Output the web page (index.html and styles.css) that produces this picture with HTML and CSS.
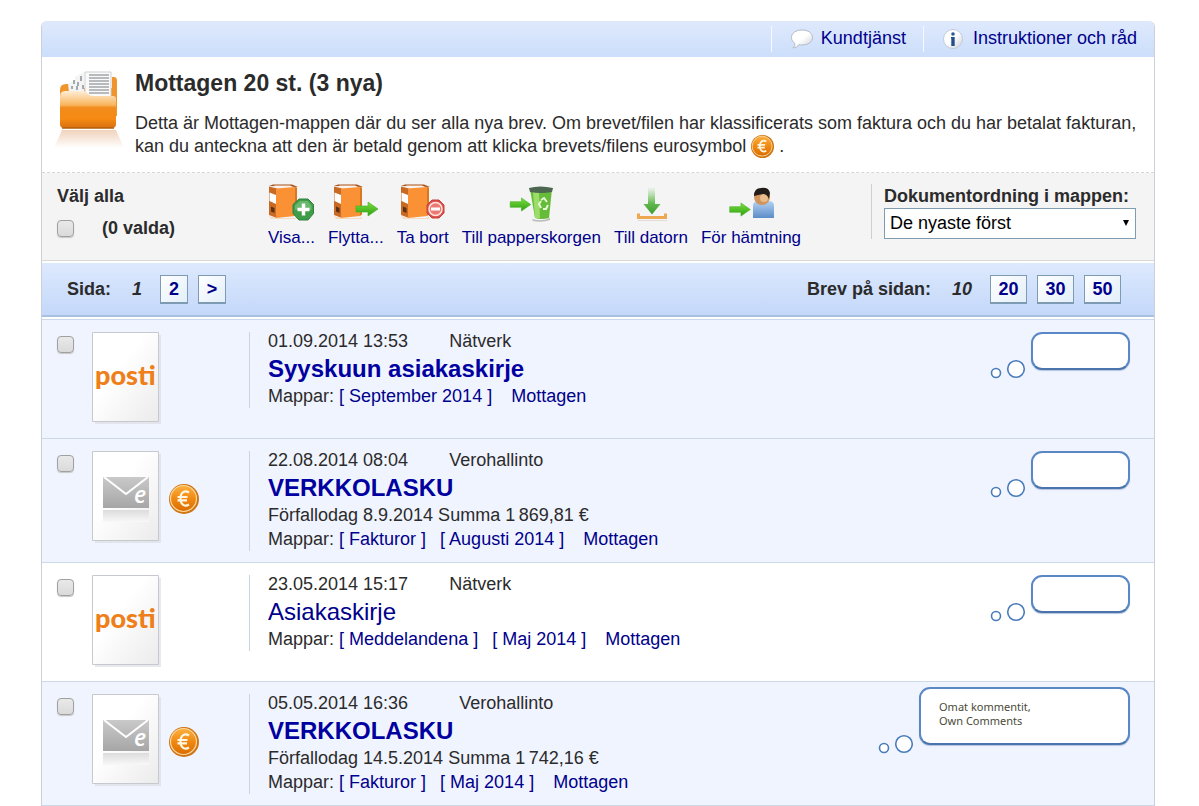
FILE: index.html
```html
<!DOCTYPE html>
<html lang="sv">
<head>
    <meta charset="UTF-8">
    <meta name="viewport" content="width=device-width, initial-scale=1.0">
    <title>Mottagen</title>
    <link rel="stylesheet" href="styles.css">
</head>
<body>

    <!-- Shared icons -->
    <svg class="sprite" aria-hidden="true">
        <defs>
            <linearGradient id="orange" x1="0" y1="0" x2="0" y2="1">
                <stop offset="0" stop-color="#fbb040"/>
                <stop offset="0.5" stop-color="#f08a12"/>
                <stop offset="1" stop-color="#d96c00"/>
            </linearGradient>
            <linearGradient id="folderFront" x1="0" y1="0" x2="0" y2="1">
                <stop offset="0" stop-color="#fdeed8"/>
                <stop offset="0.38" stop-color="#f9b45c"/>
                <stop offset="0.45" stop-color="#f28c1c"/>
                <stop offset="0.75" stop-color="#f68a12"/>
                <stop offset="1" stop-color="#d87010"/>
            </linearGradient>
            <linearGradient id="folderFade" x1="0" y1="0" x2="0" y2="1">
                <stop offset="0" stop-color="#f0d2bc"/>
                <stop offset="1" stop-color="#ffffff"/>
            </linearGradient>
            <linearGradient id="green" x1="0" y1="0" x2="0" y2="1">
                <stop offset="0" stop-color="#7be03c"/>
                <stop offset="1" stop-color="#2e9e14"/>
            </linearGradient>
            <linearGradient id="greenFade" x1="0" y1="0" x2="0" y2="1">
                <stop offset="0" stop-color="#7cc96a" stop-opacity="0"/>
                <stop offset="0.6" stop-color="#62b84e"/>
                <stop offset="1" stop-color="#3f9c30"/>
            </linearGradient>
            <linearGradient id="shirt" x1="0" y1="0" x2="0" y2="1">
                <stop offset="0" stop-color="#b4d2f2"/>
                <stop offset="1" stop-color="#5c8cc8"/>
            </linearGradient>
            <linearGradient id="page" x1="0" y1="0" x2="1" y2="1">
                <stop offset="0.4" stop-color="#ffffff"/>
                <stop offset="1" stop-color="#ebebeb"/>
            </linearGradient>
            <linearGradient id="mail" x1="0" y1="0" x2="0" y2="1">
                <stop offset="0" stop-color="#c9c9c9"/>
                <stop offset="1" stop-color="#a6a6a6"/>
            </linearGradient>
            <linearGradient id="mailFade" x1="0" y1="0" x2="0" y2="1">
                <stop offset="0" stop-color="#dcdcdc"/>
                <stop offset="1" stop-color="#f8f8f8"/>
            </linearGradient>
            <linearGradient id="bubble" x1="0" y1="0" x2="1" y2="1">
                <stop offset="0.5" stop-color="#ffffff"/>
                <stop offset="1" stop-color="#c9ced6"/>
            </linearGradient>
        </defs>

        <symbol id="euro" viewBox="0 0 30 30">
            <circle cx="15" cy="15" r="15" fill="#cf7413"/>
            <circle cx="14.500" cy="14.500" r="13" fill="url(#orange)" stroke="#fbd9a2" stroke-width="1.200"/>
            <path d="M20 8.500c-4-2.500-8.500-.5-8.500 6s4.500 8.500 8.500 6M8.500 13h10M8.500 16.400h9.500" fill="none" stroke="#fff6e4" stroke-width="2.200"/>
        </symbol>

        <symbol id="binder" viewBox="0 0 30 36">
            <path d="M1 32l7 2h18l3-1v2H3z" fill="#f7dcc2"/>
            <path d="M1 2l4-1.500h19L30 3z" fill="#a8501a"/>
            <path d="M4 2.500l3-1h15l3 1.500H8z" fill="#fff2e4"/>
            <path d="M1 2.500l8 2V34l-8-3z" fill="#c86a24"/>
            <path d="M1.500 8.500l6.500 2.500v9L1.500 17z" fill="#fff"/>
            <path d="M3 22.500l3.500 1.500v5L3 27.500z" fill="#5c3014"/>
            <path d="M8 4.500L27 3v29L8 34z" fill="#fb9135"/>
            <path d="M27 3l2 .5v27l-2 1.500z" fill="#d97822"/>
        </symbol>

        <symbol id="arrow" viewBox="0 0 24 16">
            <path d="M1 5h12V1l10 7-10 7v-4H1z" fill="url(#green)" stroke="#3fae20" stroke-width="0.600"/>
        </symbol>

        <symbol id="letter" viewBox="0 0 70 93">
            <path d="M3 3h66v89H3z" fill="#d9dbe0" opacity="0.600"/>
            <path d="M0.500 0.500h66v89H0.500z" fill="url(#page)" stroke="#c6c9ce"/>
        </symbol>

        <symbol id="envelope" viewBox="0 0 48 46">
            <path d="M1 1h46v31H1z" fill="url(#mail)"/>
            <path d="M2 1l22 17L46 1" fill="none" stroke="#fff" stroke-width="2"/>
            <path d="M1 34h46v12H1z" fill="url(#mailFade)"/>
        </symbol>

        <symbol id="thought" viewBox="0 0 36 20">
            <circle cx="6" cy="14" r="4.500" fill="#fff" stroke="#4a7cbc" stroke-width="1.600"/>
            <circle cx="26" cy="10" r="8.300" fill="#fff" stroke="#4a7cbc" stroke-width="1.600"/>
        </symbol>
    </svg>

    <div class="mailbox">

        <div class="topbar">
            <a class="topbar-link" href="#">
                <svg class="icon-bubble" viewBox="0 0 22 20"><path d="M11 1c6 0 10.500 3 10.500 7.500S17 16 11 16c-1 0-2-.1-3-.4C6.500 18 4.500 18.800 2 18.800c1.500-1.300 2-2.500 2-4.300C1.800 13 .5 11 .5 8.500.5 4 5 1 11 1z" fill="url(#bubble)" stroke="#b4bac6"/></svg>
                Kundtjänst
            </a>
            <a class="topbar-link" href="#">
                <svg class="icon-info" viewBox="0 0 20 20"><circle cx="10" cy="10" r="9.500" fill="url(#bubble)" stroke="#c4cad8"/><circle cx="10" cy="5" r="1.800" fill="#2a5a9c"/><path d="M8 8h3.700v9H8.300V9.500H8z" fill="#244f8c"/></svg>
                Instruktioner och råd
            </a>
        </div>

        <div class="intro">
            <svg class="icon-folder" viewBox="0 0 72 84">
                <path d="M10 60h54l8 18H2z" fill="url(#folderFade)"/>
                <path d="M8 20q0-6 6-6h3q2 0 3 4h40V7h2q3 0 3 4v35H8z" fill="#f0952c"/>
                <path d="M16 14l7-4v-3l9-5v28H18z" fill="#f4f4f4"/>
                <path d="M22 10v4m-2 2v3m6-7v4m3-10v5m-4 5v4m6-5v4" stroke="#8a9098" stroke-width="1.500"/>
                <path d="M33 2h26v28H33z" fill="#fafafa" stroke="#d0d0d0"/>
                <path d="M37 5h20M37 8h20M37 11h20M37 14h20M37 17h20M37 20h20M37 23h20" stroke="#a2a6aa" stroke-width="1.500"/>
                <path d="M8 27q0-6 5-6h18q3 0 5 3 2 2 5 2h20q3 0 3 3v25q0 4-4 4H12q-4 0-4-4z" fill="url(#folderFront)"/>
                <path d="M10 58h52" stroke="#b45c08" stroke-width="1.500"/>
            </svg>
            <div class="intro-text">
                <h1>Mottagen 20 st. (3 nya)</h1>
                <p>Detta är Mottagen-mappen där du ser alla nya brev. Om brevet/filen har klassificerats som faktura och du har betalat fakturan, kan du anteckna att den är betald genom att klicka brevets/filens eurosymbol <svg class="icon-euro-small"><use href="#euro"/></svg> .</p>
            </div>
        </div>

        <div class="toolbar">
            <div class="select-all">
                <label for="all">Välj alla</label>
                <div class="selected"><input type="checkbox" id="all"> <span>(0 valda)</span></div>
            </div>

            <div class="tools">
                <a href="#">
                    <svg class="tool-icon" viewBox="0 0 46 38">
                        <use href="#binder" width="30" height="36"/>
                        <path d="M31 15h9l5.500 5.500v9L40 36h-9l-6-6.500v-9z" fill="#3f9c48" stroke="#2f8040"/>
                        <path d="M32 17h7.500l4 4.500V26H27v-4.500z" fill="#7cc47e" opacity="0.700"/>
                        <path d="M35.500 19.500v12M29.500 25.500h12" stroke="#fff" stroke-width="3.500"/>
                    </svg>
                    Visa...
                </a>
                <a href="#">
                    <svg class="tool-icon" viewBox="0 0 46 38"><use href="#binder" width="30" height="36"/><use href="#arrow" x="22" y="17" width="24" height="16"/></svg>
                    Flytta...
                </a>
                <a href="#">
                    <svg class="tool-icon" viewBox="0 0 46 38">
                        <use href="#binder" width="30" height="36"/>
                        <path d="M32 16h7l5 5v8l-5 5h-7l-5-5v-8z" fill="#dc4f48" stroke="#c8403c"/>
                        <circle cx="35.500" cy="25" r="6.500" fill="#ec7a72" stroke="#ffe4e0" stroke-width="1.500"/>
                        <path d="M31 25h9" stroke="#fff" stroke-width="3"/>
                    </svg>
                    Ta bort
                </a>
                <a href="#">
                    <svg class="tool-icon" viewBox="0 0 46 38">
                        <path d="M24 35q10 3 18-1v2q-8 3-17 1z" fill="#b8bcb4"/>
                        <path d="M22 5h22l-3 29q-7 2-14 0z" fill="#66bb38"/>
                        <path d="M25 8h6l1 26h-5z" fill="#9ade68"/>
                        <path d="M21 4q11-3 24 0l-1 4q-11 2-22 0z" fill="#4c6650"/>
                        <path d="M33 16l3-2 3 4M40 21l-2 4h-3M33 24l-2-4 2-3" fill="none" stroke="#e4f8d8" stroke-width="2"/>
                        <use href="#arrow" x="1" y="13" width="23" height="15"/>
                    </svg>
                    Till papperskorgen
                </a>
                <a href="#">
                    <svg class="tool-icon" viewBox="0 0 46 38">
                        <path d="M20 3h7v17h5.500L24 30.500 15.500 20H20z" fill="url(#greenFade)"/>
                        <path d="M10.500 29.500v4h27v-4" fill="none" stroke="#eda851" stroke-width="3"/>
                        <path d="M10 36.500h29" stroke="#e0dcd6"/>
                    </svg>
                    Till datorn
                </a>
                <a href="#">
                    <svg class="tool-icon" viewBox="0 0 46 38">
                        <path d="M25 34V22q0-5 5-5h11q5 0 5 5v12z" fill="url(#shirt)"/>
                        <circle cx="34" cy="13" r="8" fill="#d0945c"/>
                        <circle cx="36" cy="14" r="4" fill="#e8bc8c"/>
                        <path d="M26 12q0-8 7-8 8-1 9 5l-1 6q-2-5-6-5-5 1-9 2z" fill="#241c18"/>
                        <use href="#arrow" x="0" y="18" width="24" height="15"/>
                    </svg>
                    För hämtning
                </a>
            </div>

            <div class="sorting">
                <label for="order">Dokumentordning i mappen:</label>
                <div class="select-box">
                    <select id="order">
                        <option>De nyaste först</option>
                        <option>De äldsta först</option>
                    </select>
                    <svg class="select-arrow" viewBox="0 0 6 6"><path d="M0 0h6L3 6z"/></svg>
                </div>
            </div>
        </div>

        <div class="pager">
            <div class="pager-group">
                <span class="pager-label">Sida:</span>
                <em>1</em>
                <a href="#">2</a>
                <a href="#">&gt;</a>
            </div>
            <div class="pager-group">
                <span class="pager-label">Brev på sidan:</span>
                <em>10</em>
                <a class="wide" href="#">20</a>
                <a class="wide" href="#">30</a>
                <a class="wide" href="#">50</a>
            </div>
        </div>

        <div class="letters">
            <div class="letter unread">
                <input type="checkbox" aria-label="Syyskuun asiakaskirje">
                <div class="thumb"><svg><use href="#letter"/></svg><span class="posti">posti</span></div>
                <div class="paid"></div>
                <div class="info">
                    <div class="meta">01.09.2014 13:53<span class="sender">Nätverk</span></div>
                    <h2><a href="#">Syyskuun asiakaskirje</a></h2>
                    <div class="line">Mappar: <a class="folder" href="#">[ September 2014 ]</a> <a class="inbox" href="#">Mottagen</a></div>
                </div>
                <div class="comment"><svg><use href="#thought"/></svg><div class="bubble"></div></div>
            </div>

            <div class="letter unread">
                <input type="checkbox" aria-label="Verkkolasku 22.08.2014">
                <div class="thumb"><svg><use href="#letter"/></svg><svg class="envelope"><use href="#envelope"/></svg><span class="e">e</span></div>
                <div class="paid"><svg class="icon-euro"><use href="#euro"/></svg></div>
                <div class="info">
                    <div class="meta">22.08.2014 08:04<span class="sender">Verohallinto</span></div>
                    <h2><a href="#">VERKKOLASKU</a></h2>
                    <div class="line">Förfallodag 8.9.2014 Summa 1&#8201;869,81 €</div>
                    <div class="line">Mappar: <a class="folder" href="#">[ Fakturor ]</a> <a class="folder" href="#">[ Augusti 2014 ]</a> <a class="inbox" href="#">Mottagen</a></div>
                </div>
                <div class="comment"><svg><use href="#thought"/></svg><div class="bubble"></div></div>
            </div>

            <div class="letter read">
                <input type="checkbox" aria-label="Asiakaskirje">
                <div class="thumb"><svg><use href="#letter"/></svg><span class="posti">posti</span></div>
                <div class="paid"></div>
                <div class="info">
                    <div class="meta">23.05.2014 15:17<span class="sender">Nätverk</span></div>
                    <h2><a href="#">Asiakaskirje</a></h2>
                    <div class="line">Mappar: <a class="folder" href="#">[ Meddelandena ]</a> <a class="folder" href="#">[ Maj 2014 ]</a> <a class="inbox" href="#">Mottagen</a></div>
                </div>
                <div class="comment"><svg><use href="#thought"/></svg><div class="bubble"></div></div>
            </div>

            <div class="letter unread">
                <input type="checkbox" aria-label="Verkkolasku 05.05.2014">
                <div class="thumb"><svg><use href="#letter"/></svg><svg class="envelope"><use href="#envelope"/></svg><span class="e">e</span></div>
                <div class="paid"><svg class="icon-euro"><use href="#euro"/></svg></div>
                <div class="info">
                    <div class="meta">05.05.2014 16:36&nbsp;&nbsp;<span class="sender">Verohallinto</span></div>
                    <h2><a href="#">VERKKOLASKU</a></h2>
                    <div class="line">Förfallodag 14.5.2014 Summa 1&#8201;742,16 €</div>
                    <div class="line">Mappar: <a class="folder" href="#">[ Fakturor ]</a> <a class="folder" href="#">[ Maj 2014 ]</a> <a class="inbox" href="#">Mottagen</a></div>
                </div>
                <div class="comment written"><svg><use href="#thought"/></svg><div class="bubble">Omat kommentit,<br>Own Comments</div></div>
            </div>
        </div>
    </div>

</body>
</html>
```
FILE: styles.css
```css
* {
    box-sizing: border-box;
}

body {
    margin: 21px 44px 0 41px;
    font-family: "Liberation Sans", Arial, sans-serif;
    font-size: 18px;
    color: #2b2b2b;
    background-color: #fff;
}

a {
    color: #00008b;
    text-decoration: none;
}

svg {
    display: block;
    flex: none;
}

.sprite {
    position: absolute;
    width: 0;
    height: 0;
}

.mailbox {
    border: 1px solid #ccd0d8;
    border-top: 0;
    border-radius: 6px 6px 0 0;
    overflow: hidden;
}

/* Top bar */
.topbar {
    display: flex;
    justify-content: flex-end;
    padding: 5px 0;
    background: linear-gradient(#dfe9fc, #cbdefb);
}

.topbar-link {
    display: flex;
    align-items: center;
    gap: 8px;
    height: 26px;
    padding: 0 17px 2px 19px;
    border-left: 1px solid #f6f9ff;
}

.icon-bubble {
    width: 22px;
    height: 20px;
    margin-top: 2px;
}

.icon-info {
    width: 20px;
    height: 20px;
    margin: 2px 2px 0 0;
}

/* Folder heading */
.intro {
    display: flex;
    gap: 11px;
    padding: 13px 10px 14px;
    border-bottom: 1px dashed #d6d6d6;
}

.icon-folder {
    width: 72px;
    height: 84px;
}

h1 {
    margin: 0 0 16px;
    font-size: 23px;
    line-height: 26px;
}

.intro p {
    margin: 0;
    line-height: 23px;
}

.icon-euro-small {
    display: inline-block;
    width: 23px;
    height: 23px;
    vertical-align: top;
}

/* Toolbar */
.toolbar {
    display: flex;
    padding: 11px 18px 12px 15px;
    background-color: #f4f4f4;
    border-bottom: 1px solid #d8d8d8;
}

.select-all,
.sorting {
    font-weight: bold;
    line-height: 24px;
}

.select-all {
    width: 211px;
}

.selected {
    display: flex;
    align-items: center;
    gap: 28px;
    margin-top: 8px;
}

input[type="checkbox"] {
    appearance: none;
    flex: none;
    width: 17px;
    height: 17px;
    margin: 0;
    border: 1px solid #a0a0a0;
    border-radius: 4px;
    background: linear-gradient(#e9e9e9, #dadada);
    box-shadow: 0 1px 1px #c8c8c8;
}

input[type="checkbox"]:checked {
    background: #6d8fc7;
}

.tools {
    display: flex;
    flex: 1;
    gap: 13px;
}

.tools a {
    display: flex;
    flex-direction: column;
    align-items: center;
    gap: 6px;
    font-size: 17px;
    line-height: 20px;
    white-space: nowrap;
}

.tool-icon {
    width: 46px;
    height: 38px;
}

.sorting {
    padding-left: 12px;
    border-left: 1px solid #cfcfcf;
    height: 55px;
}

.sorting label {
    display: block;
}

.select-box {
    position: relative;
    width: 252px;
}

.select-box select {
    appearance: none;
    display: block;
    width: 100%;
    height: 31px;
    padding: 0 20px 2px 5px;
    border: 1px solid #7f9db0;
    border-radius: 0;
    background-color: #fff;
    font-family: inherit;
    font-size: 18px;
    color: #000;
}

.select-arrow {
    position: absolute;
    top: 12px;
    right: 7px;
    width: 6px;
    height: 6px;
}

/* Paging */
.pager {
    display: flex;
    justify-content: space-between;
    margin: 2px 0;
    padding: 12px 33px 11px 25px;
    background: linear-gradient(#dde9fd, #c4d8fa);
    border-bottom: 2px solid #a9bfe3;
    font-weight: bold;
}

.pager-group {
    display: flex;
    align-items: center;
    gap: 10px;
}

.pager-label {
    margin-right: 11px;
}

.pager em {
    margin-right: 8px;
}

.pager a {
    width: 28px;
    height: 29px;
    border: 1px solid #7f9bb3;
    border-bottom-width: 2px;
    background: linear-gradient(135deg, #fff, #e3eff9);
    line-height: 27px;
    text-align: center;
}

.pager a.wide {
    width: 37px;
}

/* Letters */
.letters {
    border-top: 1px solid #ccd9ea;
}

.letter {
    display: flex;
    align-items: flex-start;
    padding: 12px 24px 11px 15px;
    border-bottom: 1px solid #ccd9e6;
}

.letter.unread {
    background-color: #f0f4ff;
}

.letter > input {
    margin-top: 4px;
}

.thumb {
    position: relative;
    margin-left: 18px;
}

.thumb svg {
    width: 70px;
    height: 93px;
    margin-bottom: 2px;
}

.thumb .envelope {
    position: absolute;
    top: 25px;
    left: 10px;
    width: 48px;
    height: 46px;
}

.thumb .e {
    position: absolute;
    top: 31px;
    left: 42px;
    color: #fff;
    font: italic 600 23px/25px "Open Sans", sans-serif;
}

.thumb .posti {
    position: absolute;
    top: 25px;
    left: 3px;
    color: #ee7f1a;
    font: 900 27px/36px Lato, sans-serif;
}

.paid {
    width: 87px;
    padding: 33px 0 0 7px;
}

.icon-euro {
    width: 30px;
    height: 30px;
}

.info {
    flex: 1;
    padding-left: 18px;
    border-left: 1px solid #cbd3de;
}

.meta {
    line-height: 18px;
}

.sender {
    margin-left: 41px;
}

h2 {
    margin: 4px 0 0;
    font-size: 24px;
    line-height: 30px;
}

.read h2 {
    font-weight: normal;
}

.unread h2 a {
    color: #0000a0;
}

.line {
    line-height: 24px;
}

.folder + .folder {
    margin-left: 9px;
}

.inbox {
    margin-left: 14px;
}

/* Own comments */
.comment {
    display: flex;
    align-items: flex-end;
    gap: 5px;
}

.comment svg {
    width: 36px;
    height: 20px;
    margin-bottom: -9px;
}

.bubble {
    width: 99px;
    height: 38px;
    border: 2px solid #5a88c6;
    border-bottom-color: #4a74ac;
    border-radius: 11px;
    background-color: #fff;
    box-shadow: 0 1px 1px #b4c4e0;
}

.written {
    margin-top: -7px;
}

.written .bubble {
    width: 211px;
    height: 58px;
    padding: 11px 18px;
    color: #4a4a38;
    font: 11px/14px "Noto Sans", sans-serif;
}
```
